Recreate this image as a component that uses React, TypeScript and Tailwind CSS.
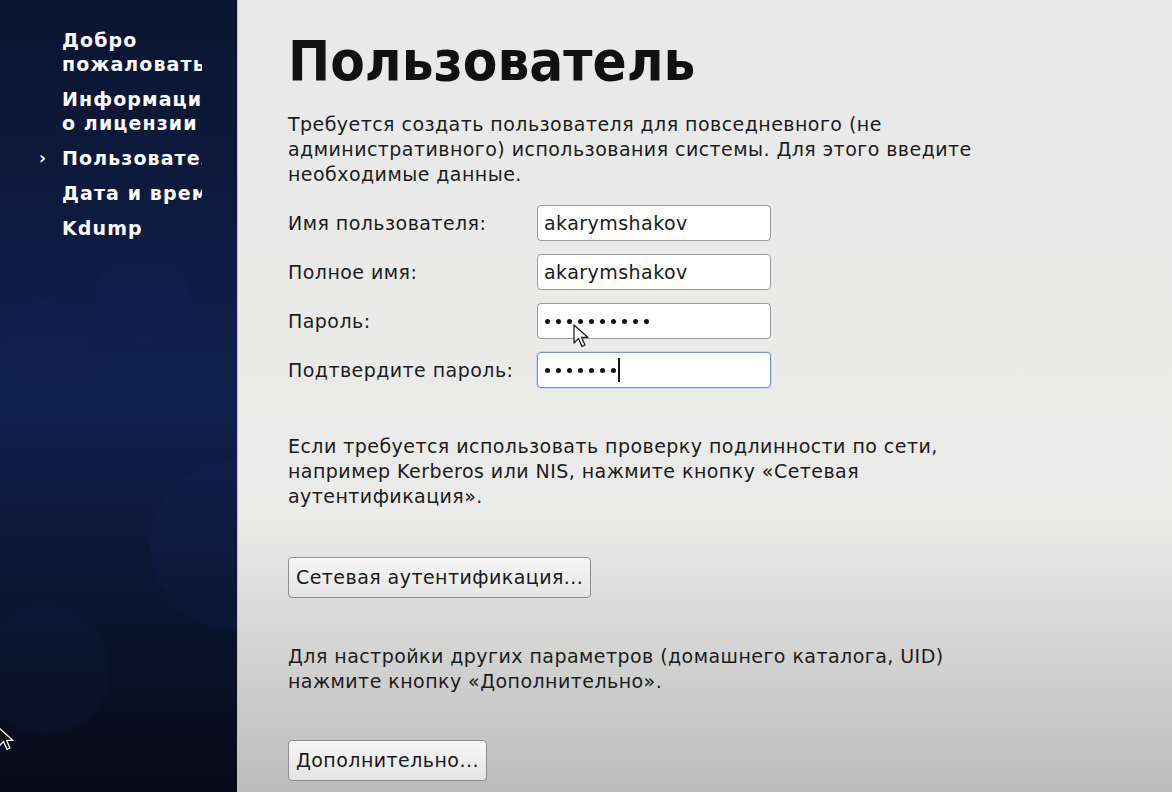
const steps = [
  { lines: ['Добро', 'пожаловать'] },
  { lines: ['Информация', 'о лицензии'] },
  { lines: ['Пользователь'], current: true },
  { lines: ['Дата и время'] },
  { lines: ['Kdump'] },
];

const fields = [
  { label: 'Имя пользователя:', value: 'akarymshakov' },
  { label: 'Полное имя:', value: 'akarymshakov' },
  { label: 'Пароль:', dots: 10 },
  { label: 'Подтвердите пароль:', dots: 7, focused: true },
];

function Cursor({ className, light }: { className: string; light?: boolean }) {
  return (
    <svg className={className} width="20" height="26" viewBox="0 0 20 26">
      <path
        d="M1 1 L1 19 L5.5 14.5 L9 22.5 L12 21 L8.6 13.4 L15 13.4 Z"
        fill={light ? '#fff' : '#111'}
        stroke={light ? '#222' : '#fff'}
        strokeWidth="1.3"
        strokeLinejoin="round"
      />
    </svg>
  );
}

function Sidebar() {
  return (
    <div className="relative w-[238px] shrink-0 overflow-hidden border-r border-[#b9c3d8] bg-gradient-to-b from-[#0b1430] via-[#10204e] to-[#070b18]">
      <div className="absolute left-[95px] top-[250px] h-[95px] w-[95px] rounded-full bg-[#1a2c66]/10" />
      <div className="absolute left-[0px] top-[300px] h-[90px] w-[90px] rounded-full bg-[#1a2c66]/10" />
      <div className="absolute left-[150px] top-[460px] h-[170px] w-[170px] rounded-full bg-[#1a2f72]/10" />
      <div className="absolute left-[-20px] top-[605px] h-[130px] w-[130px] rounded-full bg-[#1a2c66]/10" />

      <div className="relative flex flex-col gap-[11px] pt-[28px]">
        {steps.map((step) => (
          <div key={step.lines[0]} className="flex">
            <div className="w-[62px] shrink-0 pl-[39px] text-[17px] font-bold leading-[24px] text-white">
              {step.current ? '›' : ''}
            </div>
            <div className="w-[140px] overflow-hidden whitespace-nowrap text-[19px] font-bold leading-[24px] tracking-[1.1px] text-white">
              {step.lines.map((line) => (
                <div key={line}>{line}</div>
              ))}
            </div>
          </div>
        ))}
      </div>
      <Cursor className="absolute left-[-2px] top-[727px]" />
    </div>
  );
}

function Button({ children }: { children: string }) {
  return (
    <button className="h-[41px] rounded-[4px] border border-[#8e8e8e] bg-gradient-to-b from-[#f7f7f7] to-[#e4e4e4] px-[7px] text-[19px] tracking-[0.45px] text-[#1a1a1a] shadow-[inset_0_1px_0_#fff]">
      {children}
    </button>
  );
}

export default function App() {
  return (
    <div className="flex h-[792px] w-[1172px] overflow-hidden font-['DejaVu_Sans',sans-serif]">
      <Sidebar />
      <main className="relative flex-1 bg-gradient-to-b from-[#e9e9e9] via-[#ebebea] via-65% to-[#bcbcbc] pl-[50px] pt-[24px] text-[19px] tracking-[0.45px] text-[#1c1c1c]">
        <h1 className="font-['DejaVu_Sans_Condensed','DejaVu_Sans',sans-serif] text-[56px] font-bold leading-[74px] tracking-normal text-[#111]">
          Пользователь
        </h1>

        <p className="mt-[14px] w-[740px] leading-[25px]">
          Требуется создать пользователя для повседневного (не административного) использования системы. Для этого
          введите необходимые данные.
        </p>

        <div className="mt-[18px] flex flex-col gap-[13px]">
          {fields.map((f) => (
            <div key={f.label} className="flex items-center">
              <div className="w-[249px]">{f.label}</div>
              <div
                className={`flex h-[36px] w-[234px] items-center rounded-[4px] border bg-white px-[6px] ${
                  f.focused ? 'border-[#7a93bf] shadow-[0_0_0_1px_#c9d6ee]' : 'border-[#9a9a9a]'
                }`}
              >
                {f.dots ? (
                  <div className="flex items-center gap-[6px] pl-[1px]">
                    {Array.from({ length: f.dots }).map((_, i) => (
                      <span key={i} className="h-[5px] w-[5px] rounded-full bg-[#111]" />
                    ))}
                  </div>
                ) : (
                  <span className="text-[#1a1a1a]">{f.value}</span>
                )}
                {f.focused && <span className="ml-[2px] h-[24px] w-[2px] bg-[#111]" />}
              </div>
            </div>
          ))}
        </div>

        <p className="mt-[46px] w-[700px] leading-[25px]">
          Если требуется использовать проверку подлинности по сети, например Kerberos или NIS, нажмите кнопку
          «Сетевая аутентификация».
        </p>

        <div className="mt-[48px]">
          <Button>Сетевая аутентификация...</Button>
        </div>

        <p className="mt-[46px] w-[700px] leading-[25px]">
          Для настройки других параметров (домашнего каталога, UID) нажмите кнопку «Дополнительно».
        </p>

        <div className="mt-[46px]">
          <Button>Дополнительно...</Button>
        </div>

        <Cursor light className="absolute left-[335px] top-[324px]" />
      </main>
    </div>
  );
}
